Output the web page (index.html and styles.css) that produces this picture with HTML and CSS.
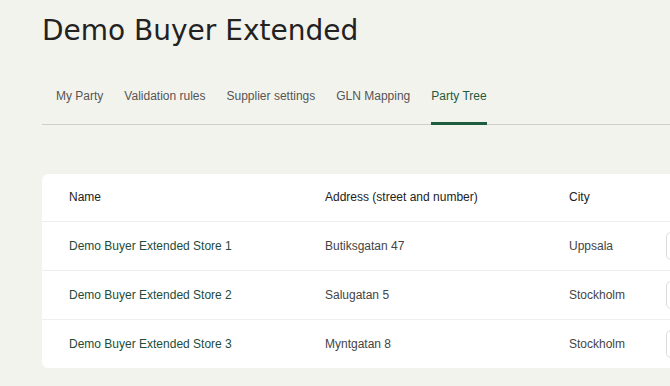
FILE: index.html
```html
<!DOCTYPE html>
<html lang="en">
<head>
    <meta charset="UTF-8">
    <meta name="viewport" content="width=device-width, initial-scale=1.0">
    <title>Demo Buyer Extended</title>
    <link rel="stylesheet" href="styles.css">
</head>
<body>
    <div class="page">
        <h1 class="title">Demo Buyer Extended</h1>

        <nav class="tabs">
            <a class="tab">My Party</a>
            <a class="tab">Validation rules</a>
            <a class="tab">Supplier settings</a>
            <a class="tab">GLN Mapping</a>
            <a class="tab active">Party Tree</a>
        </nav>

        <div class="card">
            <table class="party-table">
                <thead>
                    <tr>
                        <th class="col-name">Name</th>
                        <th class="col-address">Address (street and number)</th>
                        <th class="col-city">City</th>
                        <th class="col-action"></th>
                    </tr>
                </thead>
                <tbody>
                    <tr>
                        <td class="party-name">Demo Buyer Extended Store 1</td>
                        <td>Butiksgatan 47</td>
                        <td>Uppsala</td>
                        <td><button class="row-btn" aria-label="Edit"></button></td>
                    </tr>
                    <tr>
                        <td class="party-name">Demo Buyer Extended Store 2</td>
                        <td>Salugatan 5</td>
                        <td>Stockholm</td>
                        <td><button class="row-btn" aria-label="Edit"></button></td>
                    </tr>
                    <tr>
                        <td class="party-name">Demo Buyer Extended Store 3</td>
                        <td>Myntgatan 8</td>
                        <td>Stockholm</td>
                        <td><button class="row-btn" aria-label="Edit"></button></td>
                    </tr>
                </tbody>
            </table>
        </div>
    </div>
</body>
</html>
```

FILE: styles.css
```css
* { margin: 0; padding: 0; box-sizing: border-box; }
html, body { overflow: hidden; }
body {
    font-family: 'Liberation Sans', Arial, sans-serif;
    background: #f3f3ee;
    color: #333;
}
.page { padding: 13px 0 0 42px; width: 800px; }
.title {
    font-family: 'DejaVu Sans', sans-serif;
    font-weight: normal;
    font-size: 28px;
    color: #222;
    line-height: 36px;
}
.tabs {
    display: flex;
    gap: 21px;
    padding-left: 14px;
    margin-top: 37px;
    border-bottom: 1px solid #cfcfca;
}
.tab {
    font-size: 12px;
    color: #555;
    padding: 3px 0 19px;
    border-bottom: 3px solid transparent;
    margin-bottom: -1px;
}
.tab.active { color: #1e5a3e; border-bottom-color: #1d5c3f; }
.card {
    margin-top: 49px;
    background: white;
    border-radius: 6px 0 0 6px;
    width: 760px;
}
.party-table { border-collapse: collapse; width: 100%; font-size: 12px; }
.party-table th {
    text-align: left;
    font-weight: normal;
    color: #222;
    height: 47px;
    padding-left: 27px;
}
.party-table td {
    height: 49px;
    padding-left: 27px;
    border-top: 1px solid #eeeeea;
    color: #444;
}
.col-name { width: 256px; }
.col-address { width: 244px; }
.col-city { width: 97px; }
.party-table td.party-name { color: #234c38; }
.row-btn {
    width: 70px;
    height: 28px;
    border: 1px solid #dcdcd8;
    border-radius: 5px;
    background: white;
    display: block;
}
```
